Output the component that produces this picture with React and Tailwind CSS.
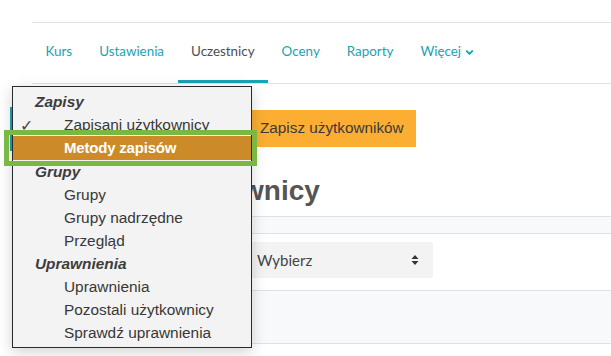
import React from 'react';

const tabs = [
  { label: 'Kurs' },
  { label: 'Ustawienia' },
  { label: 'Uczestnicy', active: true },
  { label: 'Oceny' },
  { label: 'Raporty' },
  { label: 'Więcej', more: true },
];

const menu = [
  { label: 'Zapisy', group: true },
  { label: 'Zapisani użytkownicy', checked: true },
  { label: 'Metody zapisów', selected: true },
  { label: 'Grupy', group: true },
  { label: 'Grupy' },
  { label: 'Grupy nadrzędne' },
  { label: 'Przegląd' },
  { label: 'Uprawnienia', group: true },
  { label: 'Uprawnienia' },
  { label: 'Pozostali użytkownicy' },
  { label: 'Sprawdź uprawnienia' },
];

const Chevron = () => (
  <svg width="9" height="9" viewBox="0 0 10 10" className="ml-[4px] mt-[2px]">
    <path d="M2 3.5 L5 6.5 L8 3.5" fill="none" stroke="currentColor" strokeWidth="2.2" strokeLinecap="round" strokeLinejoin="round" />
  </svg>
);

const SelectArrows = () => (
  <svg width="8" height="12" viewBox="0 0 8 12">
    <path d="M4 1 L7.5 5 L0.5 5 Z" fill="#333" />
    <path d="M4 11 L7.5 7 L0.5 7 Z" fill="#333" />
  </svg>
);

export default function App() {
  return (
    <div className="relative w-[611px] h-[356px] bg-white overflow-hidden font-['Lato',sans-serif]">
      {/* Page content */}
      <div className="pl-[32px] pt-[22px]">
        <nav className="flex border-t border-[#dee2e6] border-b h-[62px]">
          {tabs.map((t) => (
            <div
              key={t.label}
              className={`flex items-center px-[13.5px] text-[13.4px] border-b-[3px] ${
                t.active ? 'text-[#495057] border-[#1aa3b4]' : 'text-[#1aa3b4] border-transparent'
              }`}
            >
              {t.label}
              {t.more && <Chevron />}
            </div>
          ))}
        </nav>

        <div className="flex mt-[26px] h-[37px]">
          <div className="w-[216px]" />
          <button className="bg-[#fbae31] text-[#3a3a3a] text-[15.3px] pl-[12px] pr-[12px] font-['Liberation_Sans',sans-serif]">
            Zapisz użytkowników
          </button>
        </div>

        <h2 className="mt-[27px] text-[28px] font-bold leading-[34px] text-[#555] font-['Liberation_Sans',sans-serif]">
          Zapisani użytkownicy
        </h2>

        <div className="mt-[8px] border-t border-b border-[#dee2e6] bg-[#f8f9fa] h-[18px]" />
        <div className="h-[56px] flex items-start pt-[8px]">
          <div className="w-[216px]" />
          <div className="w-[185px] h-[36px] bg-[#f3f3f3] flex items-center justify-between pl-[9px] pr-[14px] text-[15px] text-[#444]">
            <span>Wybierz</span>
            <SelectArrows />
          </div>
        </div>
        <div className="border-t border-b border-[#dee2e6] bg-[#f8f9fa] h-[54px]" />
      </div>

      {/* teal focus edge of the select behind the popup */}
      <div className="absolute left-[10px] top-[107px] w-[3px] h-[44px] bg-[#1aa3b4]" />

      {/* Native select popup */}
      <div className="absolute left-[12px] top-[86px] w-[240px] h-[262px] bg-[#f3f3f3] border border-[#2a2a2a] shadow-[0_4px_14px_rgba(0,0,0,0.18)] pt-[3px] font-['Liberation_Sans',sans-serif] text-[15.4px]">
        {menu.map((m, i) => (
          <div
            key={i}
            className={`relative flex items-center ${m.selected ? 'h-[24px] bg-[#cc8b28] text-white font-bold' : 'h-[23px]'} ${
              m.group ? 'pl-[22px] font-bold italic text-[#3d3d3d]' : 'pl-[51px] text-[#383838]'
            }`}
          >
            {m.checked && <span className="absolute left-[7px] top-[1px] text-[#444] text-[16px]">✓</span>}
            {m.selected ? <span className="text-[15px] tracking-[-0.2px]">{m.label}</span> : m.label}
          </div>
        ))}
      </div>

      {/* Annotation frame */}
      <div className="absolute left-[4px] top-[130px] w-[253px] h-[36px] border-[5px] border-[#78b843]" />
    </div>
  );
}
